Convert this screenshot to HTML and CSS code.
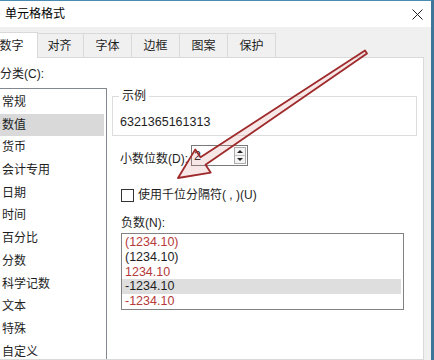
FILE: index.html
```html
<!DOCTYPE html>
<html lang="zh-CN">
  <head>
    <meta charset="UTF-8" />
    <title>单元格格式</title>
    <link rel="stylesheet" href="styles.css">
  </head>
  <body>
    <div class="dialog">
      <!-- Title bar -->
      <div class="title-bar">
        <span class="title">单元格格式</span>
        <svg class="close" width="11" height="11" viewBox="0 0 11 11">
          <path d="M0.5 0.5L10.5 10.5M10.5 0.5L0.5 10.5" />
        </svg>
      </div>

      <div class="dialog-body">
        <!-- Tabs -->
        <div class="tabs">
          <div class="tab active">数字</div>
          <div class="tab">对齐</div>
          <div class="tab">字体</div>
          <div class="tab">边框</div>
          <div class="tab">图案</div>
          <div class="tab">保护</div>
        </div>

        <!-- Number tab -->
        <div class="panel">
          <div class="label">分类(C):</div>
          <div class="panel-row">
            <ul class="category-list">
              <li>常规</li>
              <li class="selected">数值</li>
              <li>货币</li>
              <li>会计专用</li>
              <li>日期</li>
              <li>时间</li>
              <li>百分比</li>
              <li>分数</li>
              <li>科学记数</li>
              <li>文本</li>
              <li>特殊</li>
              <li>自定义</li>
            </ul>

            <div class="options">
              <fieldset class="sample">
                <legend>示例</legend>
                <div class="sample-value">6321365161313</div>
              </fieldset>

              <div class="decimals">
                <label>小数位数(D):</label>
                <div class="spin">
                  <span class="spin-value">2</span>
                  <div class="spin-buttons">
                    <div class="spin-up"></div>
                    <div class="spin-down"></div>
                  </div>
                </div>
              </div>

              <div class="check-row">
                <span class="checkbox"></span>
                <span>使用千位分隔符( , )(U)</span>
              </div>

              <div class="label neg-label">负数(N):</div>
              <ul class="neg-list">
                <li class="red">(1234.10)</li>
                <li>(1234.10)</li>
                <li class="red">1234.10</li>
                <li class="selected">-1234.10</li>
                <li class="red">-1234.10</li>
              </ul>
            </div>
          </div>
        </div>
      </div>
    </div>

    <!-- Red annotation arrow drawn over the dialog -->
    <svg class="arrow" width="434" height="360" viewBox="0 0 434 360">
      <polygon points="367,53.5 205.5,164.7 210.7,172.6 178,178 195.3,149.4 200.5,157.3 365,50.5" />
    </svg>
  </body>
</html>
```

FILE: styles.css
```css
/* Reset */
html,
body {
  margin: 0;
  padding: 0;
  width: 434px;
  height: 360px;
  overflow: hidden;
  background: #f0f0f0;
  font-family: "Liberation Sans", "Noto Sans CJK SC", sans-serif;
  font-size: 12px;
  color: #1e1e1e;
}

ul {
  list-style: none;
  margin: 0;
}

/* Dialog window, its left edge is cropped off */
.dialog {
  margin-left: -19px;
  width: 450px;
  height: 359px;
  border-top: 1px solid #4a8db3;
  border-right: 3px solid #3f7599;
  background: #f0f0f0;
  display: flex;
  flex-direction: column;
  overflow: hidden;
}

/* Title bar */
.title-bar {
  height: 26px;
  flex-shrink: 0;
  background: #fff;
  display: flex;
  align-items: center;
  padding-left: 24px;
}

.title {
  color: #000;
  line-height: 16px;
  margin-bottom: 1px;
}

.close {
  margin-left: auto;
  margin-right: 8px;
}

.close path {
  stroke: #222;
  stroke-width: 1;
  fill: none;
}

.dialog-body {
  flex: 1;
  display: flex;
  flex-direction: column;
  padding: 6px 7px 0 6px;
  min-height: 0;
}

/* Tabs */
.tabs {
  display: flex;
  align-items: flex-end;
  height: 24px;
  position: relative;
  z-index: 1;
}

.tab {
  box-sizing: border-box;
  width: 49px;
  height: 24px;
  margin-left: -1px;
  border: 1px solid #d9d9d9;
  border-bottom: none;
  background: #f0f0f0;
  display: flex;
  align-items: center;
  justify-content: center;
  line-height: 16px;
}

.tab.active {
  width: 53px;
  height: 26px;
  margin: 0 -2px -1px -2px;
  background: #fff;
  position: relative;
  z-index: 2;
}

/* Tab panel */
.panel {
  flex: 1;
  background: #fff;
  border: 1px solid #d9d9d9;
  padding: 8px 6px 0 12px;
  min-height: 0;
  overflow: hidden;
}

.label {
  line-height: 16px;
}

.panel-row {
  display: flex;
  margin-top: 6px;
}

/* Category list */
.category-list {
  box-sizing: border-box;
  width: 112px;
  height: 300px;
  margin-left: -5px;
  padding: 2px;
  border: 1px solid #828790;
  flex-shrink: 0;
}

.category-list li {
  height: 22.7px;
  line-height: 22.7px;
  padding-left: 4px;
}

.category-list li.selected {
  background: #d9d9d9;
}

/* Right side options */
.options {
  flex: 1;
  margin-left: 5px;
}

.sample {
  margin: 0;
  padding: 0 6px;
  border: 1px solid #dcdcdc;
}

.sample legend {
  padding: 0 3px;
  line-height: 16px;
}

.sample-value {
  font-size: 12.5px;
  line-height: 16px;
  padding: 10px 0 5px 1px;
}

/* Decimal places */
.decimals {
  display: flex;
  align-items: flex-start;
  margin-top: 9px;
  padding-left: 8px;
}

.decimals label {
  line-height: 16px;
  margin-top: 6px;
}

.spin {
  box-sizing: border-box;
  width: 57px;
  height: 21px;
  margin-left: 3px;
  border: 1px solid #7a7a7a;
  display: flex;
  align-items: center;
}

.spin-value {
  padding-left: 2px;
  font-size: 12.5px;
}

.spin-buttons {
  box-sizing: border-box;
  margin-left: auto;
  margin-right: 1px;
  width: 12px;
  height: 17px;
  border: 1px solid #adadad;
  background: #f4f4f4;
  display: flex;
  flex-direction: column;
}

.spin-up,
.spin-down {
  flex: 1;
  display: flex;
  align-items: center;
  justify-content: center;
}

.spin-down {
  border-top: 1px solid #c4c4c4;
}

.spin-up::after {
  content: "";
  border: 3px solid transparent;
  border-top: none;
  border-bottom: 3px solid #222;
}

.spin-down::after {
  content: "";
  border: 3px solid transparent;
  border-bottom: none;
  border-top: 3px solid #222;
}

/* Thousands separator checkbox */
.check-row {
  display: flex;
  align-items: center;
  margin-top: 20px;
  line-height: 16px;
}

.checkbox {
  box-sizing: border-box;
  width: 13px;
  height: 13px;
  margin-left: 9px;
  margin-right: 4px;
  border: 1px solid #333;
}

/* Negative numbers */
.neg-label {
  margin-top: 12px;
  padding-left: 9px;
}

.neg-list {
  box-sizing: border-box;
  width: 283px;
  height: 77px;
  margin-top: 2px;
  margin-left: 9px;
  padding: 1px 2px 0 0;
  border: 1px solid #828282;
  font-size: 12.5px;
}

.neg-list li {
  height: 14.75px;
  line-height: 14.75px;
  padding-left: 3px;
}

.neg-list li.red {
  color: #b53a3a;
}

.neg-list li.selected {
  background: #dedede;
}

/* Annotation arrow */
.arrow {
  position: absolute;
  top: 0;
  left: 0;
  pointer-events: none;
}

.arrow polygon {
  fill: rgba(214, 120, 120, 0.18);
  stroke: #9e2a2b;
  stroke-width: 1.8;
  stroke-linejoin: round;
}
```
